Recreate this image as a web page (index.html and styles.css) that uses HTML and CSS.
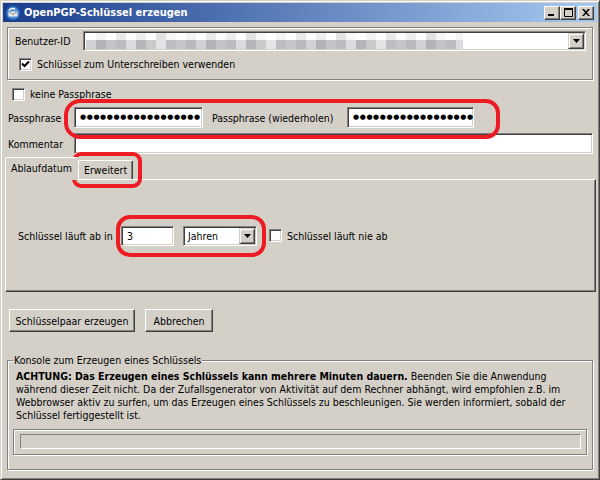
FILE: index.html
```html
<!DOCTYPE html>
<html lang="de">
<head>
<meta charset="utf-8">
<title>OpenPGP-Schlüssel erzeugen</title>
<link rel="stylesheet" href="styles.css">
</head>
<body>
<div class="window">
  <div class="titlebar">
    <svg class="app-icon" viewBox="0 0 16 16" width="16" height="16">
      <circle cx="8" cy="8" r="7.5" fill="#1f5fb0"/>
      <circle cx="8" cy="8" r="6" fill="#4b8fd8"/>
      <path d="M3.5 6.5h9v5h-9z" fill="#e8e8e8"/>
      <path d="M3.5 6.5l4.5 3 4.5-3" fill="none" stroke="#8a8a8a" stroke-width="1"/>
      <path d="M4 5.5c1-2 4-2.5 6-1.5" fill="none" stroke="#fff" stroke-width="1.4"/>
    </svg>
    <span class="title">OpenPGP-Schlüssel erzeugen</span>
    <span class="tbtn"><svg width="8" height="7" viewBox="0 0 8 7"><rect x="0" y="5" width="6" height="2" fill="#000"/></svg></span>
    <span class="tbtn"><svg width="9" height="9" viewBox="0 0 9 9"><path d="M0.5 0.5h8v8h-8z" fill="none" stroke="#000"/><rect x="0" y="0" width="9" height="2" fill="#000"/></svg></span>
    <span class="tbtn tbtn-close"><svg width="8" height="7" viewBox="0 0 8 7"><path d="M0 0h2l2 2.5 2-2.5h2l-3 3.5 3 3.5h-2l-2-2.5-2 2.5h-2l3-3.5z" fill="#000"/></svg></span>
  </div>

  <div class="group user-group">
    <div class="row">
      <span class="lbl lbl-user">Benutzer-ID</span>
      <div class="field combo">
        <div class="blurred"><div class="blur-top"></div><div class="blur-bottom"></div></div>
        <span class="drop"><svg width="7" height="4" viewBox="0 0 7 4"><path d="M0 0h7l-3.5 4z" fill="#000"/></svg></span>
      </div>
    </div>
    <div class="check-row sign-row">
      <span class="checkbox"><svg width="9" height="9" viewBox="0 0 9 9"><path d="M1 3.5l2.5 2.5 4.5-4.5" fill="none" stroke="#000" stroke-width="2"/></svg></span>
      <span class="check-label">Schlüssel zum Unterschreiben verwenden</span>
    </div>
  </div>

  <div class="check-row nopass-row">
    <span class="checkbox"></span>
    <span class="check-label">keine Passphrase</span>
  </div>

  <div class="row pass-row">
    <span class="lbl">Passphrase</span>
    <div class="field pw pw1"><span class="dots">●●●●●●●●●●●●●●●●●●</span></div>
    <span class="lbl lbl-repeat">Passphrase (wiederholen)</span>
    <div class="field pw pw2"><span class="dots">●●●●●●●●●●●●●●●●●●</span></div>
  </div>

  <div class="row comment-row">
    <span class="lbl">Kommentar</span>
    <div class="field grow"></div>
  </div>

  <div class="tabs">
    <div class="tabstrip">
      <span class="tab tab-active">Ablaufdatum</span>
      <span class="tab">Erweitert</span>
    </div>
    <div class="tabpanel">
      <span class="lbl-expire">Schlüssel läuft ab in</span>
      <div class="field num">3</div>
      <div class="field select"><span class="select-value">Jahren</span><span class="drop"><svg width="7" height="4" viewBox="0 0 7 4"><path d="M0 0h7l-3.5 4z" fill="#000"/></svg></span></div>
      <span class="checkbox never"></span>
      <span class="check-label">Schlüssel läuft nie ab</span>
    </div>
  </div>

  <div class="buttons">
    <button class="btn btn-gen">Schlüsselpaar erzeugen</button>
    <button class="btn btn-cancel">Abbrechen</button>
  </div>

  <div class="group console">
    <span class="legend">Konsole zum Erzeugen eines Schlüssels</span>
    <p class="console-text"><b>ACHTUNG: Das Erzeugen eines Schlüssels kann mehrere Minuten dauern.</b> Beenden Sie die Anwendung<br>während dieser Zeit nicht. Da der Zufallsgenerator von Aktivität auf dem Rechner abhängt, wird empfohlen z.B. im<br>Webbrowser aktiv zu surfen, um das Erzeugen eines Schlüssels zu beschleunigen. Sie werden informiert, sobald der<br>Schlüssel fertiggestellt ist.</p>
    <div class="progress"><div class="progress-track"></div></div>
  </div>

  <div class="mark mark-pass"></div>
  <div class="mark mark-tab"></div>
  <div class="mark mark-expire"></div>
</div>
</body>
</html>
```

FILE: styles.css
```css
* { box-sizing: border-box; }
html, body { margin: 0; padding: 0; }
body {
  background: #d4d0c8;
  font-family: "DejaVu Sans Condensed", "DejaVu Sans", sans-serif;
  font-stretch: condensed;
  font-size: 10.5px;
  color: #000;
}

.window {
  position: relative;
  width: 600px;
  height: 480px;
  background: #d4d0c8;
  border: 1px solid;
  border-color: #d4d0c8 #404040 #404040 #d4d0c8;
  box-shadow: inset 1px 1px 0 #fff, inset -1px -1px 0 #808080;
  padding: 2px;
  display: flex;
  flex-direction: column;
}

/* title bar */
.titlebar {
  height: 19px;
  flex: none;
  display: flex;
  align-items: center;
  padding: 0 3px 0 2px;
  background: linear-gradient(90deg, #1a3c8c, #a6caf0);
  color: #fff;
}
.app-icon { flex: none; margin-right: 3px; }
.title {
  flex: 1;
  font-weight: bold;
  font-size: 11px;
  white-space: nowrap;
}
.tbtn {
  width: 16px;
  height: 14px;
  display: flex;
  align-items: center;
  justify-content: center;
  background: #d4d0c8;
  border: 1px solid;
  border-color: #fff #404040 #404040 #fff;
  box-shadow: inset -1px -1px 0 #808080;
}
.tbtn-close { margin-left: 2px; }

/* groups */
.group {
  border: 1px solid #808080;
  box-shadow: 1px 1px 0 #fff, inset 1px 1px 0 #fff;
}
.user-group {
  margin: 5px 4px 0 4px;
  height: 53px;
  padding: 3px 6px 0 7px;
}

.row { display: flex; align-items: center; }
.lbl { flex: none; white-space: nowrap; }
.lbl-user { width: 68px; }

.field {
  background: #fff;
  border: 1px solid;
  border-color: #808080 #fff #fff #808080;
  box-shadow: inset 1px 1px 0 #404040, inset -1px -1px 0 #d4d0c8;
}
.combo {
  flex: 1;
  height: 20px;
  display: flex;
  align-items: center;
  padding: 1px;
}
.blurred {
  width: 377px;
  height: 16px;
  margin-left: 1px;
  display: flex;
  flex-direction: column;
}
.blur-top {
  height: 7px;
  background: repeating-linear-gradient(90deg,
    #ffffff 0 10px, #f3f3f5 10px 20px, #ffffff 20px 30px, #e9e9ec 30px 40px,
    #fbfbfb 40px 50px, #eeeef0 50px 60px, #ffffff 60px 70px, #e2e2e4 70px 80px,
    #f7f7f7 80px 90px);
}
.blur-bottom {
  height: 9px;
  background: repeating-linear-gradient(90deg,
    #d2d2d6 0 10px, #b3b3b7 10px 20px, #c4c4c8 20px 30px, #bcbcc0 30px 40px,
    #dcdcde 40px 50px, #b7b5b9 50px 60px, #cacacd 60px 70px, #e4e4e6 70px 80px,
    #bebec2 80px 90px, #c7c5c8 90px 100px, #b9b9bd 100px 110px);
}
.drop {
  margin-left: auto;
  width: 16px;
  height: 16px;
  display: flex;
  align-items: center;
  justify-content: center;
  background: #d4d0c8;
  border: 1px solid;
  border-color: #d4d0c8 #404040 #404040 #d4d0c8;
  box-shadow: inset 1px 1px 0 #fff, inset -1px -1px 0 #808080;
}

/* checkboxes */
.check-row { display: flex; align-items: center; height: 14px; }
.checkbox {
  flex: none;
  width: 13px;
  height: 13px;
  display: flex;
  align-items: center;
  justify-content: center;
  background: #fff;
  border: 1px solid;
  border-color: #808080 #fff #fff #808080;
  box-shadow: inset 1px 1px 0 #404040, inset -1px -1px 0 #d4d0c8;
}
.check-label { margin-left: 5px; white-space: nowrap; }
.sign-row { margin-top: 6px; padding-left: 4px; }
.nopass-row { margin-top: 7px; padding-left: 9px; }

/* passphrase */
.pass-row { margin-top: 6px; padding-left: 5px; height: 21px; }
.pass-row .lbl:first-child, .comment-row .lbl { width: 66px; }
.pw {
  height: 21px;
  display: flex;
  align-items: center;
  padding-left: 5px;
}
.pw1 { width: 129px; }
.pw2 { width: 127px; }
.lbl-repeat { width: 135px; margin-left: 9px; }
.dots {
  font-family: "DejaVu Sans", sans-serif;
  font-stretch: normal;
  font-size: 7px;
  letter-spacing: 0.6px;
  line-height: 1;
  white-space: nowrap;
}

.comment-row { margin-top: 5px; padding: 0 4px 0 5px; height: 21px; }
.grow { flex: 1; height: 21px; }

/* tabs */
.tabs { margin: 3px 1px 0 2px; display: flex; flex-direction: column; }
.tabstrip { display: flex; align-items: flex-end; height: 22px; position: relative; z-index: 1; }
.tab {
  height: 19px;
  padding: 0 5px 0 5px;
  display: flex;
  align-items: center;
  background: #d4d0c8;
  border-left: 1px solid #fff;
  border-top: 1px solid #fff;
  border-right: 1px solid #404040;
  box-shadow: inset -1px 0 0 #808080;
  border-radius: 2px 2px 0 0;
}
.tab-active {
  height: 23px;
  margin-bottom: -1px;
  width: 73px;
  padding-left: 5px;
  padding-bottom: 3px;
  border-right: none;
  box-shadow: none;
}
.tabpanel {
  height: 113px;
  display: flex;
  align-items: center;
  padding-left: 12px;
  border-top: 1px solid #fff;
  border-left: 1px solid #fff;
  border-right: 1px solid #404040;
  border-bottom: 1px solid #404040;
  box-shadow: inset -1px -1px 0 #808080;
}
.lbl-expire { width: 103px; white-space: nowrap; }
.num { width: 53px; height: 20px; padding: 2px 0 0 5px; line-height: 15px; }
.select {
  width: 74px;
  height: 20px;
  margin-left: 9px;
  display: flex;
  align-items: center;
  padding: 1px;
}
.select-value { padding-left: 3px; }
.never { margin-left: 12px; }

/* buttons */
.buttons { display: flex; gap: 10px; margin-top: 17px; padding-left: 6px; }
.btn {
  font: inherit;
  color: #000;
  height: 23px;
  padding: 0;
  background: #d4d0c8;
  border: 1px solid;
  border-color: #fff #404040 #404040 #fff;
  box-shadow: inset -1px -1px 0 #808080;
}
.btn-gen { width: 126px; }
.btn-cancel { width: 68px; }

/* console */
.console {
  position: relative;
  margin: 28px 4px 0 4px;
  height: 110px;
  padding: 9px 5px 0 5px;
}
.legend {
  position: absolute;
  top: -7px;
  left: 5px;
  padding: 0 1px;
  line-height: 13px;
  background: #d4d0c8;
  white-space: nowrap;
}
.console-text {
  margin: 0;
  padding-left: 3px;
  line-height: 13px;
  white-space: nowrap;
}
.progress {
  margin-top: 7px;
  height: 26px;
  padding: 4px 5px 0 6px;
  border: 1px solid #808080;
  box-shadow: 1px 1px 0 #fff, inset 1px 1px 0 #fff;
}
.progress-track {
  height: 15px;
  border: 1px solid;
  border-color: #808080 #fff #fff #808080;
}

/* red annotation marks drawn over the dialog */
.mark {
  position: absolute;
  border: 4px solid #ed1c24;
  pointer-events: none;
}
.mark-pass { left: 63px; top: 98px; width: 436px; height: 40px; border-radius: 16px 14px 14px 16px; }
.mark-tab { left: 71px; top: 151px; width: 70px; height: 36px; border-radius: 9px; }
.mark-expire { left: 115px; top: 214px; width: 150px; height: 42px; border-radius: 14px; }
```
